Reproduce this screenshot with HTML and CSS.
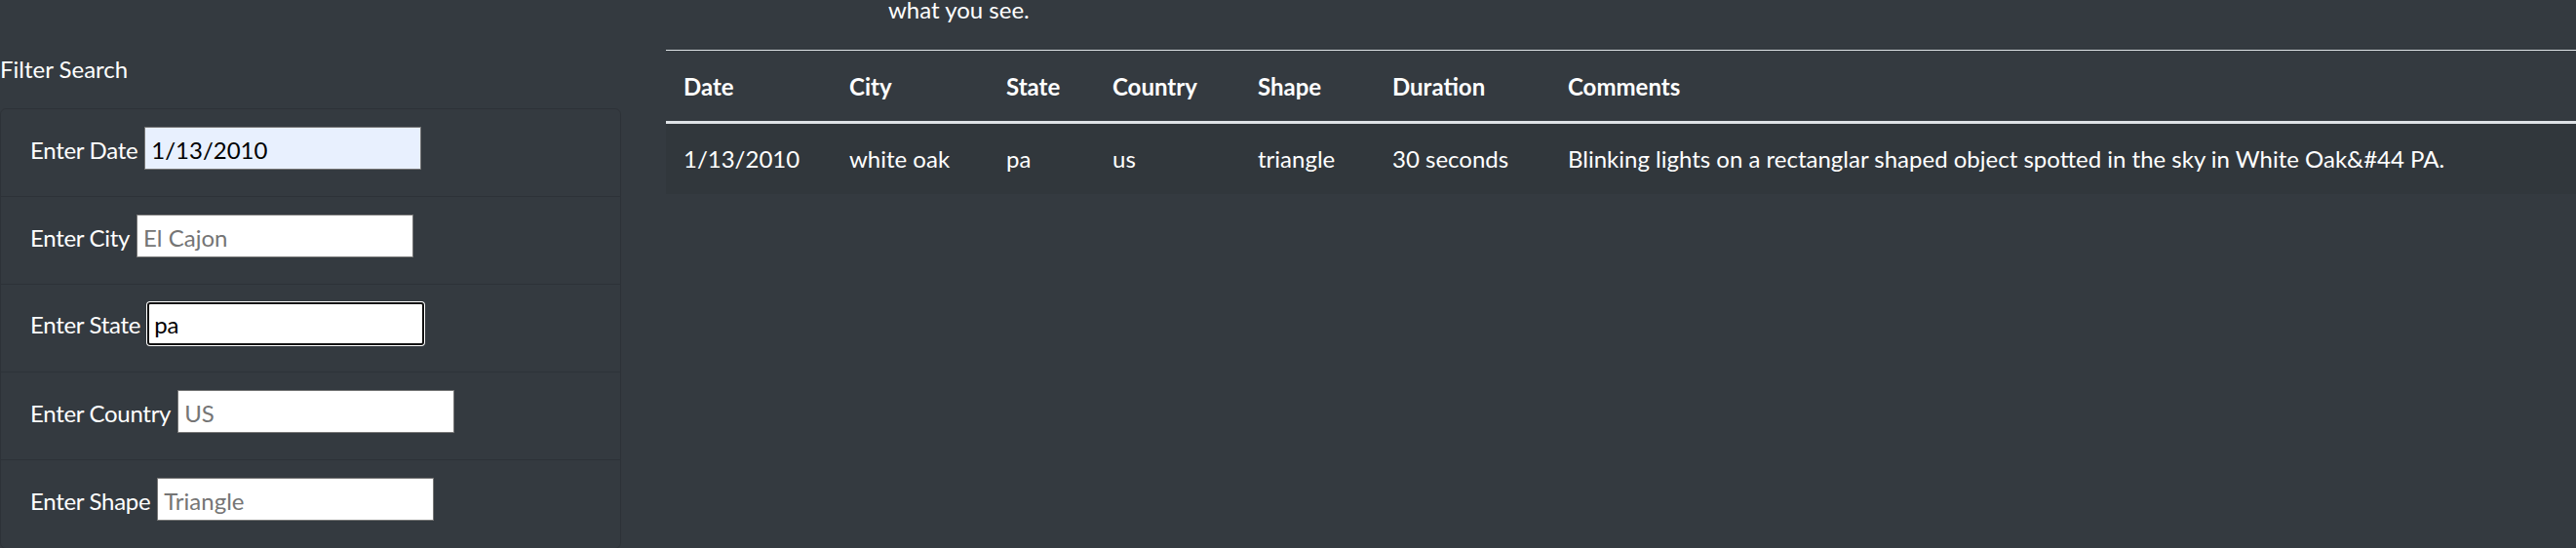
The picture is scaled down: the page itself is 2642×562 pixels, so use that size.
FILE: index.html
```html
<!DOCTYPE html>
<html lang="en">
<head>
<meta charset="utf-8">
<title>UFO Sightings</title>
<link rel="stylesheet" href="styles.css">
</head>
<body>
<div class="page">
  <aside class="filters">
    <h5 class="filter-title">Filter Search</h5>
    <ul class="filter-card">
      <li class="filter-item">
        <label class="filter-label" for="datetime">Enter Date</label>
        <input class="filter-input autofilled" id="datetime" type="text" value="1/13/2010">
      </li>
      <li class="filter-item">
        <label class="filter-label" for="city">Enter City</label>
        <input class="filter-input" id="city" type="text" placeholder="El Cajon">
      </li>
      <li class="filter-item">
        <label class="filter-label" for="state">Enter State</label>
        <input class="filter-input focused" id="state" type="text" value="pa">
      </li>
      <li class="filter-item">
        <label class="filter-label" for="country">Enter Country</label>
        <input class="filter-input" id="country" type="text" placeholder="US">
      </li>
      <li class="filter-item">
        <label class="filter-label" for="shape">Enter Shape</label>
        <input class="filter-input" id="shape" type="text" placeholder="Triangle">
      </li>
    </ul>
  </aside>
  <main class="results">
    <p class="intro">what you see.</p>
    <table class="ufo-table">
      <colgroup>
        <col class="c-date"><col class="c-city"><col class="c-state"><col class="c-country"><col class="c-shape"><col class="c-duration"><col>
      </colgroup>
      <thead>
        <tr>
          <th>Date</th><th>City</th><th>State</th><th>Country</th><th>Shape</th><th>Duration</th><th>Comments</th>
        </tr>
      </thead>
      <tbody>
        <tr>
          <td>1/13/2010</td><td>white oak</td><td>pa</td><td>us</td><td>triangle</td><td>30 seconds</td><td>Blinking lights on a rectanglar shaped object spotted in the sky in White Oak&amp;#44 PA.</td>
        </tr>
      </tbody>
    </table>
  </main>
</div>
</body>
</html>
```
FILE: styles.css
```css
html, body {
  margin: 0;
  padding: 0;
}
body {
  background: #343a40;
  color: #ffffff;
  font-family: Lato, "Open Sans", "Noto Sans", sans-serif;
  font-size: 24px;
  line-height: 36px;
  overflow: hidden;
}
.page {
  display: flex;
  align-items: flex-start;
  gap: 46px;
}
.filters {
  width: 637px;
  flex: none;
}
.filter-title {
  margin: 53px 0 22px;
  font-size: 24px;
  font-weight: 400;
  line-height: 36px;
}
.filter-card {
  list-style: none;
  margin: 0;
  padding: 0;
  border: 1px solid rgba(0, 0, 0, 0.125);
  border-radius: 6px;
}
.filter-item {
  box-sizing: border-box;
  height: 90px;
  padding: 18px 30px 0;
  display: flex;
  align-items: baseline;
  gap: 7px;
  border-bottom: 1px solid rgba(0, 0, 0, 0.125);
}
.filter-item:last-child {
  border-bottom: 0;
}
.filter-label {
  white-space: nowrap;
  letter-spacing: -0.3px;
}
.filter-input {
  box-sizing: border-box;
  width: 284px;
  height: 44px;
  margin: 0;
  padding: 2px 6px 0;
  border: 1px solid #767676;
  border-radius: 0;
  background: #ffffff;
  color: #000000;
  font-family: Lato, "Open Sans", "Noto Sans", sans-serif;
  font-size: 24px;
  outline: none;
}
.filter-input::placeholder {
  color: #757575;
}
.filter-input.autofilled {
  background: #e8f0fe;
}
.filter-input.focused {
  border: 2px solid #101010;
  border-radius: 3px;
  padding: 1px 5px 0;
  box-shadow: 0 0 0 1px #ffffff;
}
.results {
  flex: 1;
  min-width: 0;
}
.intro {
  margin: -8px 0 23px;
  padding-left: 228px;
}
.ufo-table {
  width: 100%;
  border-collapse: collapse;
  table-layout: fixed;
}
.c-date { width: 170px; }
.c-city { width: 161px; }
.c-state { width: 109px; }
.c-country { width: 149px; }
.c-shape { width: 138px; }
.c-duration { width: 180px; }
.ufo-table th,
.ufo-table td {
  text-align: left;
  vertical-align: top;
  white-space: nowrap;
}
.ufo-table th {
  font-weight: 700;
  padding: 19px 18px 17px;
  border-top: 1px solid #dee2e6;
  border-bottom: 3px solid #dee2e6;
}
.ufo-table td {
  padding: 18px 18px;
  font-weight: 400;
}
.ufo-table tbody tr:nth-child(odd) {
  background: rgba(0, 0, 0, 0.05);
}
```
